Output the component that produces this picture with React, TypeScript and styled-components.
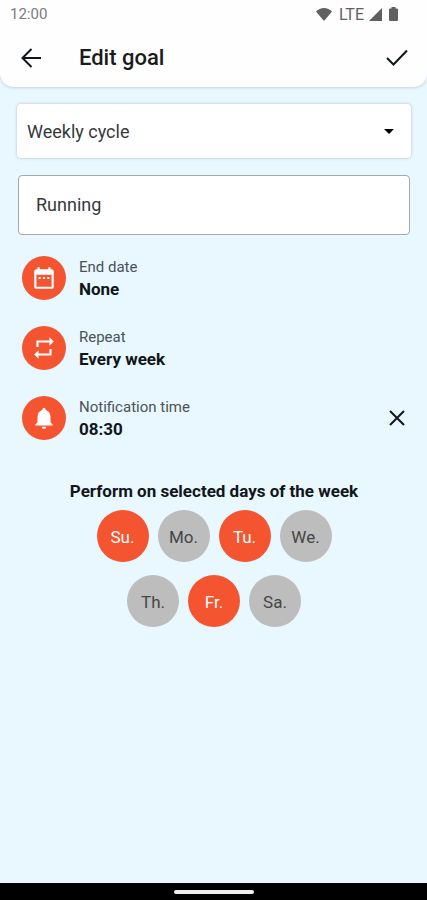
import React, { useState } from "react";
import styled, { createGlobalStyle } from "styled-components";

const ink = "#111618";
const accent = "#f45530";

const GlobalStyle = createGlobalStyle`
  *, *::before, *::after { box-sizing: border-box; }
  body { margin: 0; background: #e9f7fe; font-family: Roboto, sans-serif; color: ${ink}; }
  button, input, select { font: inherit; color: inherit; }
  h1, h2, p { margin: 0; }
`;

const Screen = styled.div`
  display: flex;
  flex-direction: column;
  min-height: 100vh;
`;

const Header = styled.header`
  background: #fefefe;
  border-radius: 0 0 14px 14px;
  box-shadow: 0 1px 3px rgba(60, 90, 105, 0.22);
`;

const StatusBar = styled.div`
  display: flex;
  align-items: center;
  justify-content: space-between;
  height: 28px;
  padding: 0 29px 0 10px;
  color: #7b7b7b;
  font-size: 15px;
`;

const StatusIcons = styled.div`
  display: flex;
  align-items: center;
  gap: 7px;
  color: #606060;

  svg { display: block; }
`;

const Network = styled.span`
  display: flex;
  align-items: center;
  gap: 5px;
  font-size: 16px;
`;

const AppBar = styled.div`
  display: flex;
  align-items: center;
  height: 59px;
  padding: 0 14px 0 15px;
`;

const IconButton = styled.button<{ $compact?: boolean }>`
  display: grid;
  place-items: center;
  flex: none;
  width: ${(p) => (p.$compact ? 28 : 32)}px;
  height: 32px;
  padding: 0;
  border: 0;
  background: none;
  cursor: pointer;
`;

const Title = styled.h1`
  flex: 1;
  padding-left: 32px;
  font-size: 22px;
  line-height: 28px;
  font-weight: 500;
  color: #1b1b1b;
`;

const Form = styled.main`
  flex: 1;
  display: flex;
  flex-direction: column;
  padding: 17px 16px 24px 17px;
`;

const SelectField = styled.div`
  display: grid;
  align-items: center;

  > * { grid-area: 1 / 1; }
  > svg { justify-self: end; margin-right: 17px; pointer-events: none; }
`;

const Select = styled.select`
  width: 100%;
  height: 54px;
  padding: 0 40px 0 10px;
  appearance: none;
  border: 0;
  border-radius: 4px;
  background: #fff;
  box-shadow: 0 0 3px rgba(70, 90, 130, 0.36);
  font-size: 18px;
  color: #36393b;
`;

const TextInput = styled.input`
  height: 60px;
  margin: 17px 1px 0;
  padding: 0 17px 2px;
  border: 1px solid #a3a8a9;
  border-radius: 4px;
  background: #fff;
  font-size: 18px;
  color: #36393b;
`;

const Settings = styled.div`
  display: flex;
  flex-direction: column;
  gap: 26px;
  padding-top: 21px;
`;

const SettingRow = styled.div`
  display: flex;
  align-items: center;
  padding-left: 5px;
`;

const SettingButton = styled.button`
  flex: 1;
  display: flex;
  align-items: center;
  gap: 13px;
  padding: 0;
  border: 0;
  background: none;
  text-align: left;
  cursor: pointer;
`;

const Badge = styled.span`
  display: grid;
  place-items: center;
  width: 44px;
  height: 44px;
  border-radius: 50%;
  background: ${accent};
  color: #fff;
`;

const SettingText = styled.span`
  display: flex;
  flex-direction: column;
`;

const SettingLabel = styled.span`
  font-size: 15px;
  line-height: 22px;
  color: #4a5358;
`;

const SettingValue = styled.span`
  font-size: 17px;
  line-height: 22px;
  font-weight: 700;
`;

const DaysSection = styled.section`
  display: flex;
  flex-direction: column;
  align-items: center;
  gap: 8px;
  padding-top: 40px;
`;

const DaysTitle = styled.h2`
  font-size: 17px;
  line-height: 22px;
  font-weight: 700;
`;

const Days = styled.div`
  display: flex;
  flex-wrap: wrap;
  justify-content: center;
  gap: 13px 9px;
  max-width: 240px;
`;

const Day = styled.button<{ $on: boolean }>`
  width: 52px;
  height: 52px;
  padding: 2px 0 0;
  border: 0;
  border-radius: 50%;
  background: ${(p) => (p.$on ? accent : "#bdbdbd")};
  color: ${(p) => (p.$on ? "#fff" : "#454545")};
  font-size: 17px;
  cursor: pointer;
`;

const NavigationBar = styled.footer`
  display: flex;
  justify-content: center;
  align-items: center;
  height: 17px;
  background: #000;
`;

const NavigationHandle = styled.span`
  width: 80px;
  height: 4px;
  border-radius: 2px;
  background: #f0f0ee;
`;

const CalendarIcon = () => (
  <svg width="26" height="26" viewBox="0 0 24 24" fill="currentColor" aria-hidden="true">
    <path d="M9 11H7v2h2v-2Zm4 0h-2v2h2v-2Zm4 0h-2v2h2v-2Zm2-7h-1V2h-2v2H8V2H6v2H5a2 2 0 0 0-2 2v14a2 2 0 0 0 2 2h14a2 2 0 0 0 2-2V6a2 2 0 0 0-2-2Zm0 16H5V9h14v11Z" />
  </svg>
);

const RepeatIcon = () => (
  <svg width="26" height="26" viewBox="0 0 24 24" fill="currentColor" aria-hidden="true">
    <path d="M7 7h10v3l4-4-4-4v3H5v6h2V7Zm10 10H7v-3l-4 4 4 4v-3h12v-6h-2v4Z" />
  </svg>
);

const BellIcon = () => (
  <svg width="26" height="26" viewBox="0 0 24 24" fill="currentColor" aria-hidden="true">
    <path d="M12 22a2 2 0 0 0 2-2h-4a2 2 0 0 0 2 2Zm6-6v-5c0-3.070-1.640-5.640-4.500-6.320V4a1.500 1.500 0 0 0-3 0v.680C7.630 5.360 6 7.920 6 11v5l-2 2v1h16v-1l-2-2Z" />
  </svg>
);

type Setting = { label: string; value: string; icon: React.ReactNode; clearable?: boolean };

const settings: Setting[] = [
  { label: "End date", value: "None", icon: <CalendarIcon /> },
  { label: "Repeat", value: "Every week", icon: <RepeatIcon /> },
  { label: "Notification time", value: "08:30", icon: <BellIcon />, clearable: true },
];

const weekdays = ["Su.", "Mo.", "Tu.", "We.", "Th.", "Fr.", "Sa."];

export default function App() {
  const [selected, setSelected] = useState<string[]>(["Su.", "Tu.", "Fr."]);
  const toggle = (day: string) =>
    setSelected((days) => (days.includes(day) ? days.filter((d) => d !== day) : [...days, day]));

  return (
    <Screen>
      <GlobalStyle />
      <Header>
        <StatusBar>
          <span>12:00</span>
          <StatusIcons>
            <svg width="16" height="13" viewBox="0 0 16 13" fill="currentColor" aria-hidden="true">
              <path d="M8 13 0 3.500C2.200 1.400 5 0 8 0s5.800 1.400 8 3.500L8 13Z" />
            </svg>
            <Network>
              LTE
              <svg width="13" height="13" viewBox="0 0 13 13" fill="currentColor" aria-hidden="true">
                <path d="M13 0v13H0L13 0Z" />
              </svg>
            </Network>
            <svg width="9" height="14" viewBox="0 0 9 14" fill="currentColor" aria-hidden="true">
              <path d="M2.500 0h4v1.500H8a1 1 0 0 1 1 1V13a1 1 0 0 1-1 1H1a1 1 0 0 1-1-1V2.500a1 1 0 0 1 1-1h1.500V0Z" />
            </svg>
          </StatusIcons>
        </StatusBar>
        <AppBar>
          <IconButton aria-label="Back">
            <svg width="20" height="20" viewBox="0 0 20 20" fill="none" stroke="currentColor" strokeWidth="2" aria-hidden="true">
              <path d="M20 10H2M10.500 1 1.500 10l9 9" />
            </svg>
          </IconButton>
          <Title>Edit goal</Title>
          <IconButton aria-label="Save">
            <svg width="22" height="18" viewBox="0 0 22 18" fill="none" stroke="currentColor" strokeWidth="2" aria-hidden="true">
              <path d="m1 9 6.500 6.500L21 1.500" />
            </svg>
          </IconButton>
        </AppBar>
      </Header>

      <Form>
        <SelectField>
          <Select aria-label="Cycle" defaultValue="weekly">
            <option value="weekly">Weekly cycle</option>
          </Select>
          <svg width="10" height="5" viewBox="0 0 10 5" fill="#000" aria-hidden="true">
            <path d="M0 0h10L5 5 0 0Z" />
          </svg>
        </SelectField>
        <TextInput aria-label="Goal name" defaultValue="Running" />

        <Settings>
          {settings.map(({ label, value, icon, clearable }) => (
            <SettingRow key={label}>
              <SettingButton>
                <Badge>{icon}</Badge>
                <SettingText>
                  <SettingLabel>{label}</SettingLabel>
                  <SettingValue>{value}</SettingValue>
                </SettingText>
              </SettingButton>
              {clearable && (
                <IconButton $compact aria-label={`Clear ${label.toLowerCase()}`}>
                  <svg width="16" height="16" viewBox="0 0 16 16" fill="none" stroke="currentColor" strokeWidth="2" aria-hidden="true">
                    <path d="m1 1 14 14M15 1 1 15" />
                  </svg>
                </IconButton>
              )}
            </SettingRow>
          ))}
        </Settings>

        <DaysSection>
          <DaysTitle id="days-title">Perform on selected days of the week</DaysTitle>
          <Days role="group" aria-labelledby="days-title">
            {weekdays.map((day) => {
              const on = selected.includes(day);
              return (
                <Day key={day} $on={on} aria-pressed={on} onClick={() => toggle(day)}>
                  {day}
                </Day>
              );
            })}
          </Days>
        </DaysSection>
      </Form>

      <NavigationBar>
        <NavigationHandle />
      </NavigationBar>
    </Screen>
  );
}
